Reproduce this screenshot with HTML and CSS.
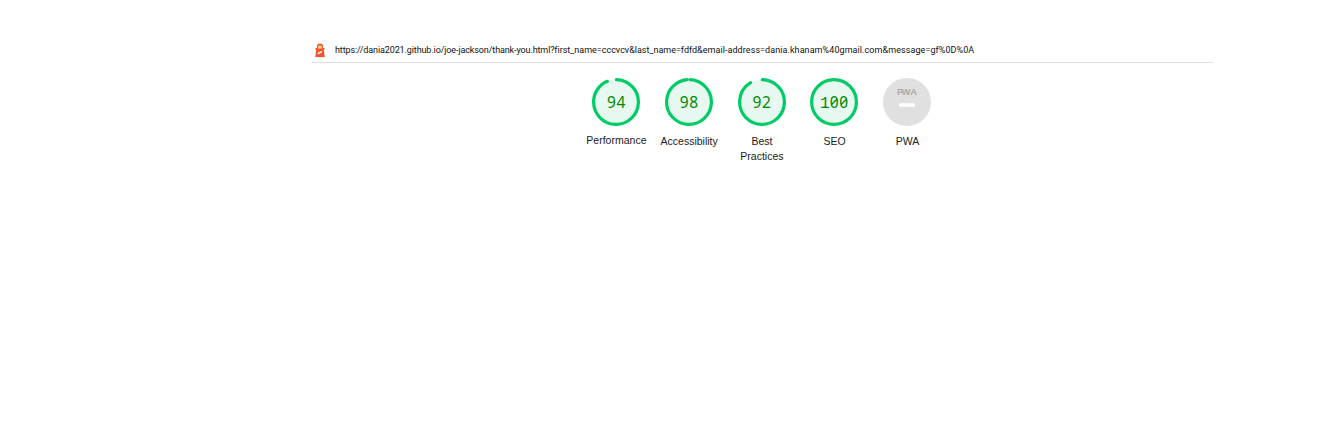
FILE: index.html
```html
<!DOCTYPE html>
<html lang="en">
<head>
<meta charset="utf-8">
<title>Lighthouse Report</title>
<link rel="stylesheet" href="styles.css">
</head>
<body>
<main class="report">
  <header class="topbar">
    <svg class="logo" width="12" height="14" viewBox="0 0 12 14">
      <path d="M3 5V3.2Q3 .6 6 .6T9 3.2V5h1.5v1.8H9.7L10.8 14H1.2l1.1-7.2h-.8V5z" fill="#f4512c"/>
      <path d="M4.2 2.6h3.6V5.6H4.2z" fill="#ffdb80"/>
      <path d="M4 9.4 7.8 7.7l.3 1.8-4.5 2z" fill="#fff"/>
    </svg>
    <span class="url"><span class="path">https://dania2021.github.io/joe-jackson/thank-you.html?</span><span class="name-fields">first_name=cccvcv&amp;last_name=fdfd&amp;</span><span class="contact-fields">email-address=dania.khanam%40gmail.com&amp;message=gf%0D%0A</span></span>
  </header>
  <section class="scores">
    <div class="gauge">
      <div class="dial"><svg class="ring" viewBox="0 0 48 48"><circle class="base" cx="24" cy="24" r="22.4"/><circle class="arc" cx="24" cy="24" r="22.4" pathLength="100" stroke-dasharray="93.4 100" transform="rotate(-89 24 24)"/></svg><span class="value">94</span></div>
      <span class="label label-first">Performance</span>
    </div>
    <div class="gauge">
      <div class="dial"><svg class="ring" viewBox="0 0 48 48"><circle class="base" cx="24" cy="24" r="22.4"/><circle class="arc" cx="24" cy="24" r="22.4" pathLength="100" stroke-dasharray="97.7 100" transform="rotate(-87 24 24)"/></svg><span class="value">98</span></div>
      <span class="label">Accessibility</span>
    </div>
    <div class="gauge">
      <div class="dial"><svg class="ring" viewBox="0 0 48 48"><circle class="base" cx="24" cy="24" r="22.4"/><circle class="arc" cx="24" cy="24" r="22.4" pathLength="100" stroke-dasharray="91.2 100" transform="rotate(-89 24 24)"/></svg><span class="value">92</span></div>
      <span class="label">Best Practices</span>
    </div>
    <div class="gauge">
      <div class="dial"><svg class="ring" viewBox="0 0 48 48"><circle class="base" cx="24" cy="24" r="22.4"/><circle class="arc" cx="24" cy="24" r="22.4"/></svg><span class="value value-full"><span class="mono">1</span>00</span></div>
      <span class="label">SEO</span>
    </div>
    <div class="gauge">
      <div class="dial"><svg class="ring" viewBox="0 0 48 48"><circle cx="24" cy="24" r="24" fill="#e0e0e0"/><text class="pwa" y="17"><tspan x="14">P</tspan><tspan x="18.6">W</tspan><tspan x="27.2">A</tspan></text><rect x="16" y="25.3" width="16" height="3.4" rx="1.2" fill="#fff"/></svg></div>
      <span class="label">PWA</span>
    </div>
  </section>
</main>
</body>
</html>
```
FILE: styles.css
```css
body {
  margin: 0;
  background: #fff;
  color: #212121;
  font-family: "Liberation Sans", Arial, sans-serif;
}
.report {
  width: 901px;
  margin-left: 312px;
  padding-top: 38px;
}
.topbar {
  display: flex;
  align-items: center;
  box-sizing: border-box;
  height: 25px;
  padding-left: 2px;
  border-bottom: 1px solid #dedede;
}
.logo {
  flex: none;
  margin-right: 9px;
}
.url {
  font-family: Roboto, sans-serif;
  font-size: 9px;
  line-height: 12px;
  white-space: nowrap;
  color: #111;
}
.path {
  letter-spacing: -0.11px;
}
.name-fields {
  letter-spacing: -0.01px;
}
.contact-fields {
  letter-spacing: 0.075px;
}
.scores {
  display: flex;
  margin-left: 267.75px;
  padding-top: 15px;
}
.gauge {
  display: flex;
  flex-direction: column;
  align-items: center;
  width: 72.75px;
}
.dial {
  display: grid;
  place-items: center;
  width: 48px;
  height: 48px;
}
.ring,
.value {
  grid-area: 1 / 1;
}
.ring {
  display: block;
  width: 48px;
  height: 48px;
}
.base {
  fill: #e6f8ef;
}
.arc {
  fill: none;
  stroke: #0c6;
  stroke-width: 3.2;
  stroke-linecap: round;
}
.value {
  padding-left: 0.6px;
  color: #080;
  font-family: "Noto Sans", sans-serif;
  font-size: 15.5px;
  font-feature-settings: "zero";
  line-height: 20px;
  letter-spacing: 0.6px;
}
.value-full {
  padding: 1px 0 0;
}
.mono {
  font-family: "Liberation Mono", monospace;
  font-size: 16px;
  letter-spacing: 0;
}
.label {
  width: 62px;
  margin-top: 8px;
  padding-left: 0.6px;
  font-size: 10.5px;
  line-height: 15px;
  text-align: center;
}
.label-first {
  margin-top: 7px;
}
.pwa {
  fill: #ababab;
  font-family: "Liberation Sans", Arial, sans-serif;
  font-size: 9.5px;
  font-weight: bold;
}
```
